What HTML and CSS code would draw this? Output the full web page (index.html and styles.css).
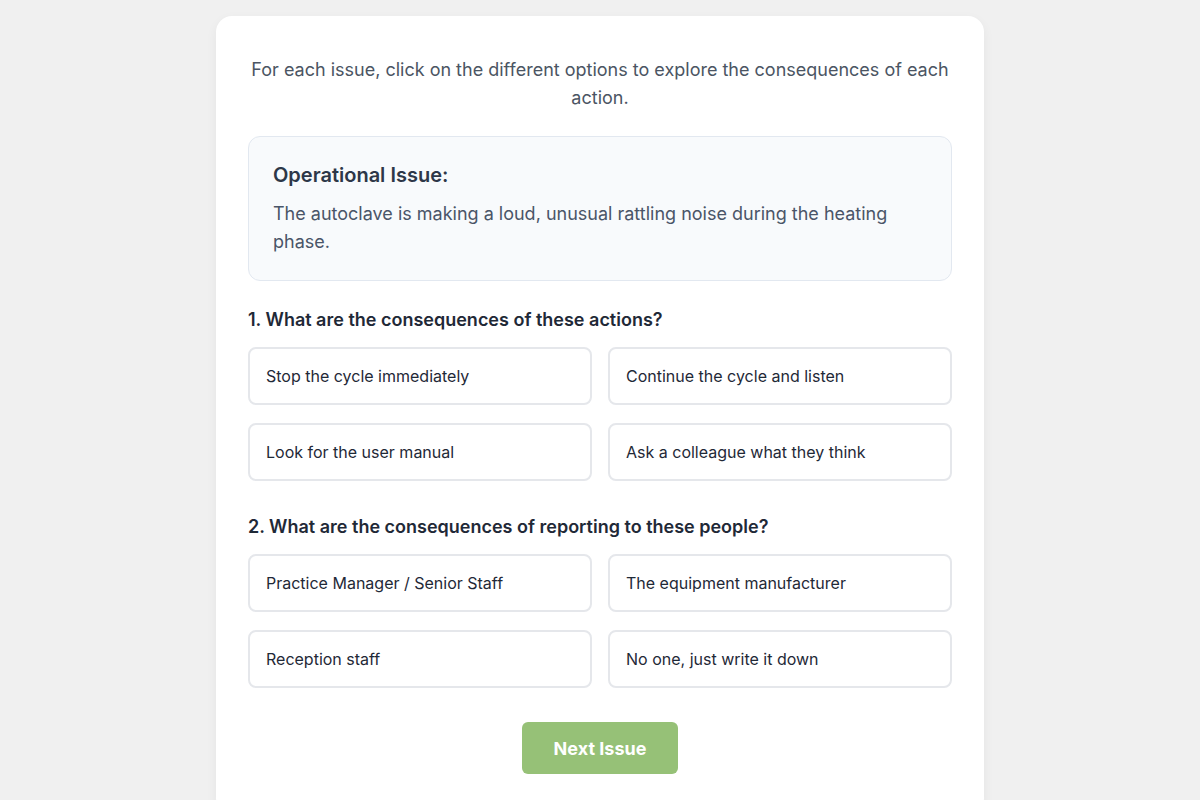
FILE: index.html
```html
<!DOCTYPE html>
<html lang="en">
<head>
<meta charset="utf-8">
<title>Operational Issues</title>
<link rel="stylesheet" href="styles.css">
</head>
<body>
<main class="card">
  <p class="intro">For each issue, click on the different options to explore the consequences of each action.</p>
  <section class="issue">
    <h2 class="issue-title">Operational Issue:</h2>
    <p class="issue-text">The autoclave is making a loud, unusual rattling noise during the heating phase.</p>
  </section>
  <section class="question">
    <h3 class="question-title">1. What are the consequences of these actions?</h3>
    <div class="options">
      <button class="option">Stop the cycle immediately</button>
      <button class="option">Continue the cycle and listen</button>
      <button class="option">Look for the user manual</button>
      <button class="option">Ask a colleague what they think</button>
    </div>
  </section>
  <section class="question">
    <h3 class="question-title">2. What are the consequences of reporting to these people?</h3>
    <div class="options">
      <button class="option">Practice Manager / Senior Staff</button>
      <button class="option">The equipment manufacturer</button>
      <button class="option">Reception staff</button>
      <button class="option">No one, just write it down</button>
    </div>
  </section>
  <div class="actions">
    <button class="next">Next Issue</button>
  </div>
</main>
</body>
</html>
```

FILE: styles.css
```css
* { box-sizing: border-box; }
html, body { margin: 0; }
body {
  background: #f0f0f0;
  font-family: Inter, "Noto Sans", sans-serif;
  padding-top: 16px;
}
.card {
  width: 768px;
  margin: 0 auto;
  background: #ffffff;
  border-radius: 16px;
  box-shadow: 0 4px 12px rgba(0,0,0,0.05);
  padding: 40px 32px 40px;
}
.intro {
  margin: 0 0 24px;
  text-align: center;
  font-size: 18px;
  line-height: 28px;
  color: #4b5563;
}
.issue {
  background: #f8fafc;
  border: 1px solid #e2e8f0;
  border-radius: 12px;
  padding: 24px;
  margin-bottom: 27px;
}
.issue-title {
  margin: 0 0 11px;
  font-size: 20px;
  line-height: 28px;
  font-weight: 600;
  color: #2d3748;
}
.issue-text {
  margin: 0;
  font-size: 18px;
  line-height: 28px;
  color: #4a5568;
}
.question { margin-bottom: 34px; }
.question + .question { margin-bottom: 34px; }
.question-title {
  margin: 0 0 15px;
  font-size: 18px;
  line-height: 24px;
  font-weight: 600;
  color: #1f2937;
}
.options {
  display: grid;
  grid-template-columns: 1fr 1fr;
  column-gap: 16px;
  row-gap: 18px;
}
.option {
  font-family: inherit;
  display: flex;
  align-items: center;
  height: 58px;
  text-align: left;
  background: #ffffff;
  border: 2px solid #e5e7eb;
  border-radius: 8px;
  padding: 0 16px;
  font-size: 16px;
  line-height: 22px;
  color: #1f2937;
  cursor: pointer;
}
.actions {
  display: flex;
  justify-content: center;
}
.next {
  font-family: inherit;
  width: 156px;
  height: 52px;
  border: none;
  border-radius: 6px;
  background: #96c177;
  color: #ffffff;
  font-size: 18px;
  font-weight: 700;
  cursor: pointer;
}
```
